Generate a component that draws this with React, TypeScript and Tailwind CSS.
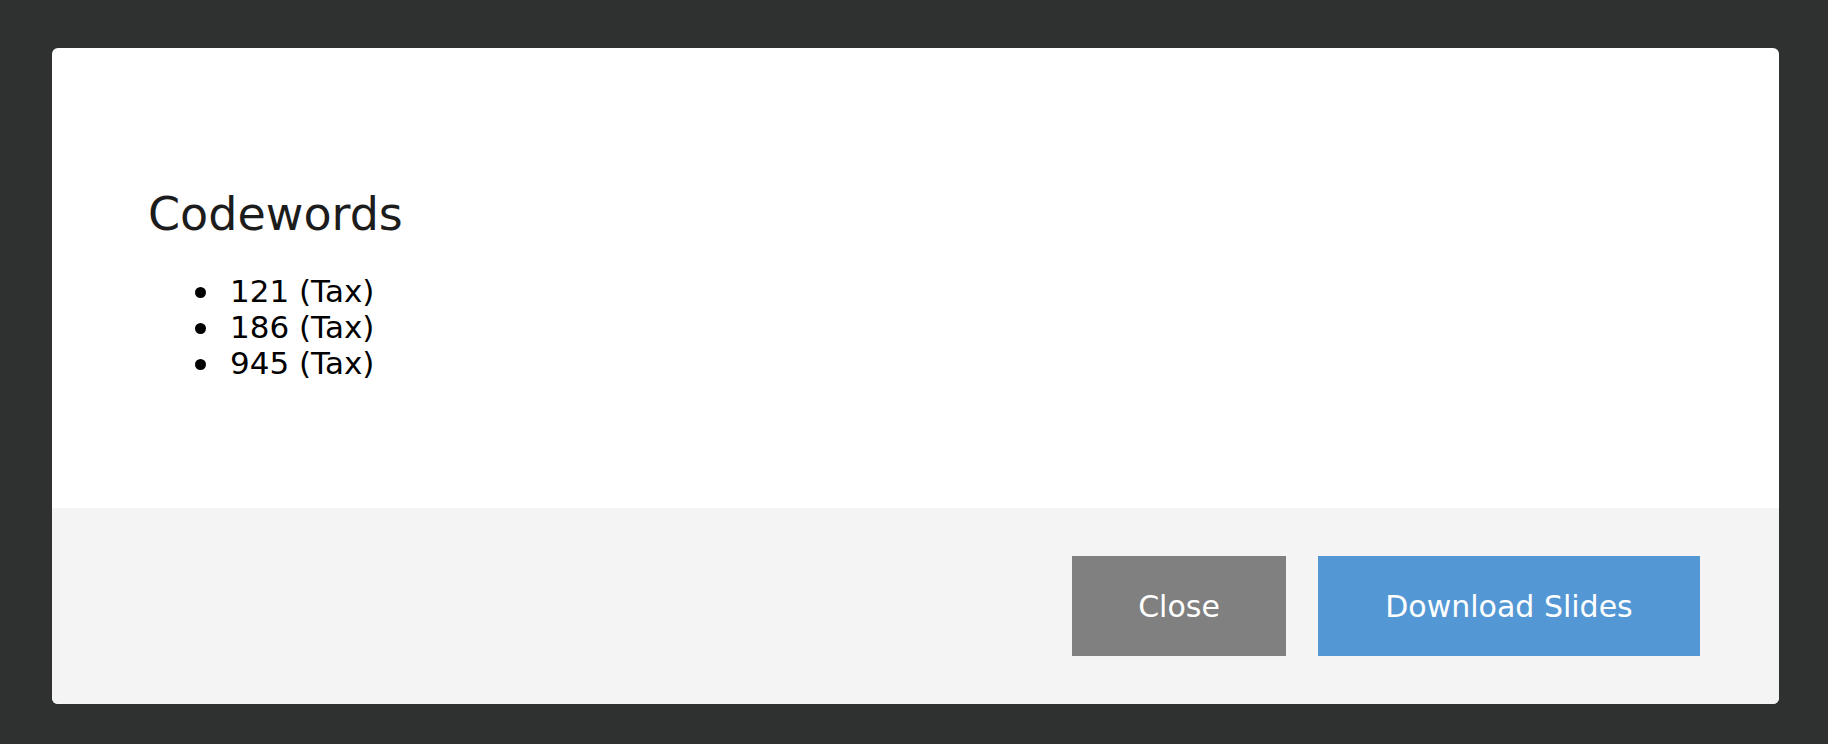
const codewords = ["121 (Tax)", "186 (Tax)", "945 (Tax)"];

export default function App() {
  return (
    <div
      className="w-[1828px] h-[744px] bg-[#2f3030] pt-[48px] pl-[52px]"
      style={{ fontFamily: '"DejaVu Sans", Verdana, sans-serif' }}
    >
      <div className="w-[1727px] h-[656px] rounded-md overflow-hidden flex flex-col bg-white">
        {/* body */}
        <div className="h-[460px] pt-[143px] pl-[96px]">
          <h2 className="text-[46px] leading-[46px] text-[#1c1c1c] font-normal">
            Codewords
          </h2>
          <ul className="mt-[36px] pl-[47px] text-[31px] leading-[36px] text-black">
            {codewords.map((item) => (
              <li key={item} className="flex items-center gap-[24px]">
                <span className="w-[11px] h-[11px] rounded-full bg-black mt-[3px]" />
                <span>{item}</span>
              </li>
            ))}
          </ul>
        </div>

        {/* footer */}
        <div className="flex-1 bg-[#f4f4f4] flex justify-end items-center gap-[32px] pr-[79px]">
          <button className="h-[100px] w-[214px] bg-[#808080] text-white text-[30px]">
            Close
          </button>
          <button className="h-[100px] w-[382px] bg-[#5398d4] text-white text-[30px]">
            Download Slides
          </button>
        </div>
      </div>
    </div>
  );
}
